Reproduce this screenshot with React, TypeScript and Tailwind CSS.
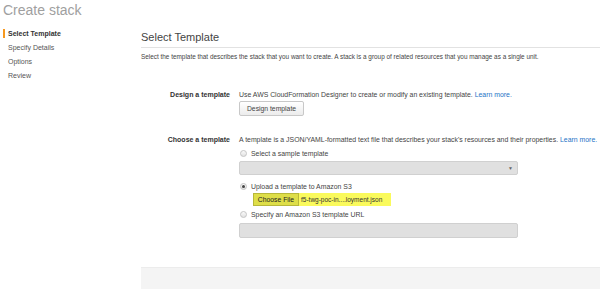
import React from "react";

const navItems = ["Select Template", "Specify Details", "Options", "Review"];

function Radio({ checked }: { checked?: boolean }) {
  return (
    <span className="flex h-[7px] w-[7px] shrink-0 items-center justify-center rounded-full border border-[#c4c4c4] bg-gradient-to-b from-[#fafafa] to-[#e2e2e2]">
      {checked && <span className="h-[3px] w-[3px] rounded-full bg-[#444]" />}
    </span>
  );
}

export default function App() {
  return (
    <div
      className="flex h-[289px] w-[600px] overflow-hidden bg-white text-[#444]"
      style={{ fontFamily: '"Liberation Sans", Arial, sans-serif' }}
    >
      {/* left: title + wizard steps */}
      <div className="w-[141px] shrink-0">
        <div className="pl-[3px] pt-[1px] text-[14px] leading-[18px] text-[#a0a0a0]">Create stack</div>
        <div className="mt-[10px] flex flex-col gap-[5px]">
          {navItems.map((item, i) => (
            <div key={item} className="flex h-[9px] items-center">
              <span className={`ml-[3px] h-[9px] w-[2px] ${i === 0 ? "bg-[#f7981d]" : ""}`} />
              <span
                className={`ml-[3px] text-[7px] leading-[9px] ${
                  i === 0 ? "font-bold text-[#333]" : "text-[#555]"
                }`}
              >
                {item}
              </span>
            </div>
          ))}
        </div>
      </div>

      {/* right: form */}
      <div className="flex flex-1 flex-col">
        <div className="border-b border-[#e2e2e2] pb-[3px] pt-[31px] text-[11px] leading-[13px] text-[#444]">
          Select Template
        </div>
        <div className="mt-[5px] whitespace-nowrap text-[6.4px] leading-[8px] text-[#444]">
          Select the template that describes the stack that you want to create. A stack is a group of related resources
          that you manage as a single unit.
        </div>

        <div className="mt-[29px] grid grid-cols-[89px_1fr] gap-x-[9px] text-[6.9px] leading-[9px]">
          <div className="whitespace-nowrap text-right text-[7px] font-bold text-[#333]">Design a template</div>
          <div>
            <div className="whitespace-nowrap">
              Use AWS CloudFormation Designer to create or modify an existing template.{" "}
              <span className="text-[#2573c6]">Learn more.</span>
            </div>
            <button className="mt-[2px] h-[15px] w-[65px] rounded-[2px] border border-[#c8c8c8] bg-gradient-to-b from-[#ffffff] to-[#ececec] text-[6.8px] text-[#444]">
              Design template
            </button>
          </div>
        </div>

        <div className="mt-[19px] grid grid-cols-[89px_1fr] gap-x-[9px] text-[6.9px] leading-[9px]">
          <div className="whitespace-nowrap text-right text-[7px] font-bold text-[#333]">Choose a template</div>
          <div className="w-[279px]">
            <div className="whitespace-nowrap">
              A template is a JSON/YAML-formatted text file that describes your stack's resources and their properties.{" "}
              <span className="text-[#2573c6]">Learn more.</span>
            </div>

            <label className="mt-[5px] flex items-center gap-[4px] pl-[1px]">
              <Radio />
              <span>Select a sample template</span>
            </label>
            <div className="mt-[3px] flex h-[14px] items-center justify-end rounded-[2px] border border-[#d0d0d0] bg-[#e0e0e0] pr-[4px]">
              <span className="text-[5px] text-[#666]">▼</span>
            </div>

            <label className="mt-[7px] flex items-center gap-[4px] pl-[1px]">
              <Radio checked />
              <span>Upload a template to Amazon S3</span>
            </label>
            <div className="ml-[14px] mt-[2px] flex h-[13px] w-[138px] items-center bg-[#fafa5c]">
              <span className="flex h-[13px] w-[46px] items-center justify-center border border-[#b8b83a] bg-[#dede48] text-[6.8px] text-[#222]">
                Choose File
              </span>
              <span className="ml-[2px] whitespace-nowrap text-[6.5px] text-[#333]">f5-twg-poc-in....loyment.json</span>
            </div>

            <label className="mt-[4px] flex items-center gap-[4px] pl-[1px]">
              <Radio />
              <span>Specify an Amazon S3 template URL</span>
            </label>
            <div className="mt-[4px] h-[15px] rounded-[2px] border border-[#d0d0d0] bg-[#e0e0e0]" />
          </div>
        </div>

        <div className="mt-auto h-[22px] border-t border-[#ececec] bg-[#f4f4f4]" />
      </div>
    </div>
  );
}
